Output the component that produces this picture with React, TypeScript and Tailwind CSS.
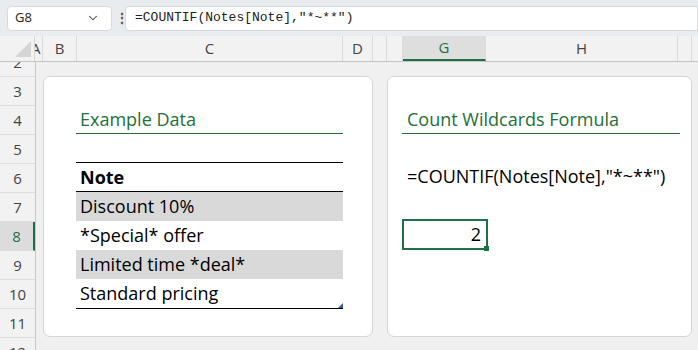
import { ChevronDown } from "lucide-react";

const font = "font-['Open_Sans','Liberation_Sans',sans-serif]";

const columns = [
  { label: "A", w: "w-[8px]", partial: true },
  { label: "B", w: "w-[34px]" },
  { label: "C", w: "w-[266px]" },
  { label: "D", w: "w-[30px]" },
  { label: "", w: "w-[14px]" },
  { label: "", w: "w-[16px]" },
  { label: "G", w: "w-[83px]", active: true },
  { label: "H", w: "w-[192px]" },
  { label: "", w: "w-[14px]" },
];

const rows = [2, 3, 4, 5, 6, 7, 8, 9, 10, 11, 12];

const notes = [
  { text: "Discount 10%", shaded: true },
  { text: "*Special* offer", shaded: false },
  { text: "Limited time *deal*", shaded: true },
  { text: "Standard pricing", shaded: false },
];

function FormulaBar() {
  return (
    <div className="flex h-[36px] items-center gap-[3px] bg-[#e9ecef] pl-[7px]">
      <div className="flex h-[25px] w-[105px] items-center justify-between rounded-[4px] border border-[#d6d9dd] bg-white pl-[7px] pr-[11px]">
        <span className={`${font} text-[13px] text-[#222]`}>G8</span>
        <ChevronDown size={14} strokeWidth={1.8} className="text-[#444]" />
      </div>
      <span className="w-[7px] text-center text-[14px] font-bold leading-none text-[#555]">⋮</span>
      <div className="flex h-[25px] flex-1 items-center rounded-l-[4px] border border-[#d6d9dd] bg-white pl-[9px]">
        <span className="font-['Liberation_Mono',monospace] text-[13px] text-[#222]">
          =COUNTIF(Notes[Note],"*~**")
        </span>
      </div>
    </div>
  );
}

function ColumnHeaders() {
  return (
    <div className="flex h-[26px] border-b border-[#c4c4c4] bg-[#f2f2f2]">
      <div className="relative w-[35px] border-r border-[#d6d6d6]">
        <div className="absolute bottom-[4px] right-[3px] h-0 w-0 border-b-[16px] border-l-[16px] border-b-[#d4d4d4] border-l-transparent" />
      </div>
      {columns.map((c, i) => (
        <div
          key={i}
          className={`${c.w} flex shrink-0 items-center overflow-hidden border-r border-[#dadada] ${font} text-[15px] ${
            c.partial ? "justify-start" : "justify-center"
          } ${
            c.active
              ? "border-b-2 border-b-[#1e7145] bg-[#dedede] text-[#1e7145]"
              : "text-[#444]"
          }`}
        >
          <span className={c.partial ? "-ml-[4px]" : ""}>{c.label}</span>
        </div>
      ))}
    </div>
  );
}

function RowHeaders() {
  return (
    <div className="flex w-[36px] shrink-0 flex-col border-r border-[#c8c8c8] bg-[#f2f2f2]">
      <div className="-mt-[14px]">
        {rows.map((r) => (
          <div
            key={r}
            className={`flex h-[29px] items-center justify-center border-b border-[#dcdcdc] ${font} text-[15px] ${
              r === 8
                ? "border-r-2 border-r-[#1e7145] bg-[#dcdcdc] text-[#1e7145]"
                : "text-[#444]"
            }`}
          >
            {r}
          </div>
        ))}
      </div>
    </div>
  );
}

function ExampleCard() {
  return (
    <div className="h-[261px] w-[330px] shrink-0 rounded-[7px] border border-[#d4d4d4] bg-white pl-[32px] pt-[29px]">
      <div className="w-[267px]">
        <div className={`flex h-[28px] items-center border-b border-[#2d6a3a] pl-[4px] ${font} text-[18px] text-[#22703a]`}>
          Example Data
        </div>
        <div className="h-[28px]" />
        <div className="border-y border-black">
          <div className={`flex h-[28px] items-center pl-[4px] ${font} text-[18px] font-bold text-black`}>
            Note
          </div>
        </div>
        <div className="relative border-b border-black">
          {notes.map((n) => (
            <div
              key={n.text}
              className={`flex h-[29px] items-center pl-[4px] ${font} text-[18px] text-black ${
                n.shaded ? "bg-[#d9d9d9]" : "bg-white"
              }`}
            >
              {n.text}
            </div>
          ))}
          <div className="absolute bottom-0 right-0 h-0 w-0 border-b-[5px] border-l-[5px] border-b-[#3b55a8] border-l-transparent" />
        </div>
      </div>
    </div>
  );
}

function FormulaCard() {
  return (
    <div className="h-[261px] w-[305px] shrink-0 rounded-[7px] border border-[#d4d4d4] bg-white pl-[14px] pr-[11px] pt-[29px]">
      <div className={`flex h-[28px] items-center border-b border-[#2d6a3a] pl-[5px] ${font} text-[18px] text-[#22703a]`}>
        Count Wildcards Formula
      </div>
      <div className="h-[28px]" />
      <div className={`flex h-[29px] items-center pl-[5px] ${font} text-[18px] text-black`}>
        =COUNTIF(Notes[Note],"*~**")
      </div>
      <div className="h-[28px]" />
      <div className="relative flex h-[31px] w-[86px] items-center justify-end border-2 border-[#1e7145] pr-[5px]">
        <span className={`${font} text-[18px] text-black`}>2</span>
        <div className="absolute -bottom-[3px] -right-[3px] h-[5px] w-[5px] bg-[#1e7145]" />
      </div>
    </div>
  );
}

export default function App() {
  return (
    <div className="flex h-[350px] w-[698px] flex-col overflow-hidden bg-[#f0f0f0]">
      <FormulaBar />
      <ColumnHeaders />
      <div className="flex min-h-0 flex-1 overflow-hidden">
        <RowHeaders />
        <div className="flex flex-1 items-start gap-[14px] pl-[7px] pt-[14px]">
          <ExampleCard />
          <FormulaCard />
        </div>
      </div>
    </div>
  );
}
